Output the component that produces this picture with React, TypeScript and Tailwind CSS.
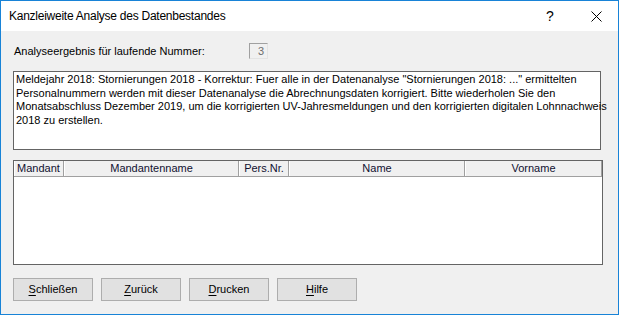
import React from "react";

const COLUMNS = [
  { label: "Mandant", width: "w-[50px]", align: "justify-start pl-[2px]" },
  { label: "Mandantenname", width: "w-[175px]", align: "justify-center" },
  { label: "Pers.Nr.", width: "w-[50px]", align: "justify-center" },
  { label: "Name", width: "w-[176px]", align: "justify-center" },
  { label: "Vorname", width: "flex-1", align: "justify-center" },
];

const BUTTONS = [
  { key: "S", rest: "chließen" },
  { key: "Z", rest: "urück" },
  { key: "D", rest: "rucken" },
  { key: "H", rest: "ilfe" },
];

export default function App() {
  return (
    <div className="w-[619px] h-[315px] border border-[#1883d7] bg-[#f0f0f0] flex flex-col font-['Liberation_Sans',Arial,sans-serif] text-[11px] text-black overflow-hidden">
      {/* Title bar */}
      <div className="h-[30px] bg-white flex items-center shrink-0">
        <span className="pl-[8px] text-[12px] tracking-[-0.25px] font-['Liberation_Sans',sans-serif] text-black">
          Kanzleiweite Analyse des Datenbestandes
        </span>
        <span className="ml-auto w-[46px] text-center text-[14px] text-black leading-none">?</span>
        <span className="w-[46px] flex justify-center mr-[-1px]">
          <svg width="11" height="11" viewBox="0 0 11 11">
            <path d="M0.5 0.5L10.5 10.5M10.5 0.5L0.5 10.5" stroke="#000" strokeWidth="1" />
          </svg>
        </span>
      </div>

      {/* Body */}
      <div className="flex flex-col pl-[12px]">
        <div className="mt-[12px] h-[16px] flex items-center">
          <span className="w-[236px] pl-[1px]">Analyseergebnis für laufende Nummer:</span>
          <div className="w-[19px] h-[16px] border-t border-l border-[#a0a0a0] border-b border-r border-b-[#e3e3e3] border-r-[#e3e3e3] bg-[#f0f0f0] flex items-center justify-end pr-[3px] text-[#6d6d6d]">
            3
          </div>
        </div>

        <div className="mt-[12px] w-[588px] h-[79px] border border-[#646464] bg-white px-[2px] pt-[1px] leading-[13.7px] whitespace-nowrap">
          Meldejahr 2018: Stornierungen 2018 - Korrektur: Fuer alle in der Datenanalyse "Stornierungen 2018: ..." ermittelten
          <br />
          Personalnummern werden mit dieser Datenanalyse die Abrechnungsdaten korrigiert. Bitte wiederholen Sie den
          <br />
          Monatsabschluss Dezember 2019, um die korrigierten UV-Jahresmeldungen und den korrigierten digitalen Lohnnachweis
          <br />
          2018 zu erstellen.
        </div>

        <div className="mt-[10px] w-[590px] h-[105px] border border-[#646464] bg-white flex flex-col">
          <div className="h-[16px] flex border-b border-[#a0a0a0] bg-[#f0f0f0]">
            {COLUMNS.map((c) => (
              <div
                key={c.label}
                className={`${c.width} h-full flex items-center ${c.align} border-l border-white border-r border-r-[#a0a0a0] text-[#101030] leading-none`}
              >
                {c.label}
              </div>
            ))}
          </div>
        </div>

        <div className="mt-[13px] flex gap-[8px]">
          {BUTTONS.map((b) => (
            <button
              key={b.key}
              type="button"
              className="w-[80px] h-[23px] bg-[#e1e1e1] border border-[#adadad] flex items-center justify-center text-black"
            >
              <span>
                <span className="underline underline-offset-[2px]">{b.key}</span>
                {b.rest}
              </span>
            </button>
          ))}
        </div>
      </div>
    </div>
  );
}
